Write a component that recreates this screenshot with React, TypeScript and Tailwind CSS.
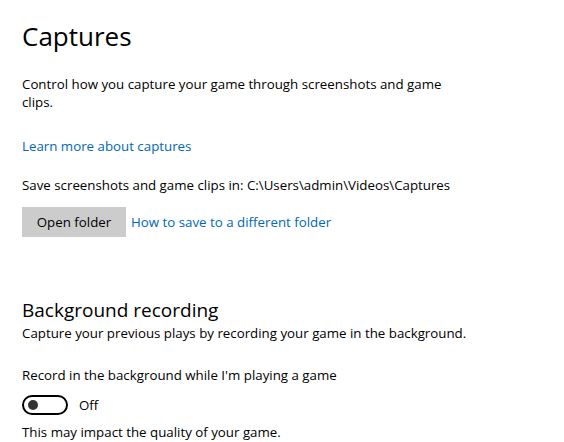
import React from "react";

export default function App() {
  const font = { fontFamily: '"Open Sans", "Noto Sans", sans-serif' };
  return (
    <div
      className="w-[564px] h-[442px] bg-white overflow-hidden text-black pl-[22px]"
      style={font}
    >
      <div className="flex flex-col">
        <h1 className="pt-[18px] text-[26px] leading-[36px] font-normal text-black">Captures</h1>
        <p className="mt-[21px] w-[430px] text-[13.3px] leading-[18px] text-black">
          Control how you capture your game through screenshots and game clips.
        </p>
        <a className="mt-[25px] text-[13.3px] leading-[20px] text-[#0067b8] w-fit">Learn more about captures</a>
        <p className="mt-[19px] text-[13.3px] leading-[20px] text-black">
          Save screenshots and game clips in: C:\Users\admin\Videos\Captures
        </p>
        <div className="mt-[12px] flex items-center gap-[5px]">
          <button className="w-[104px] h-[30px] pt-[1px] bg-[#cccccc] text-[13.3px] text-black">Open folder</button>
          <a className="text-[13.3px] leading-[20px] text-[#0067b8]">How to save to a different folder</a>
        </div>
        <h2 className="mt-[60px] text-[19px] leading-[26px] font-normal text-black">Background recording</h2>
        <p className="text-[13.3px] leading-[20px] text-black">
          Capture your previous plays by recording your game in the background.
        </p>
        <p className="mt-[22px] text-[13.3px] leading-[20px] text-black">
          Record in the background while I'm playing a game
        </p>
        <div className="mt-[10px] flex items-center">
          <div className="w-[46px] h-[20px] rounded-full border-2 border-black flex items-center pl-[4px]">
            <div className="w-[10px] h-[10px] rounded-full bg-[#333333]" />
          </div>
          <span className="ml-[11px] text-[13.3px] leading-[20px]">Off</span>
        </div>
        <p className="mt-[7px] text-[13.3px] leading-[20px] text-black">This may impact the quality of your game.</p>
      </div>
    </div>
  );
}
